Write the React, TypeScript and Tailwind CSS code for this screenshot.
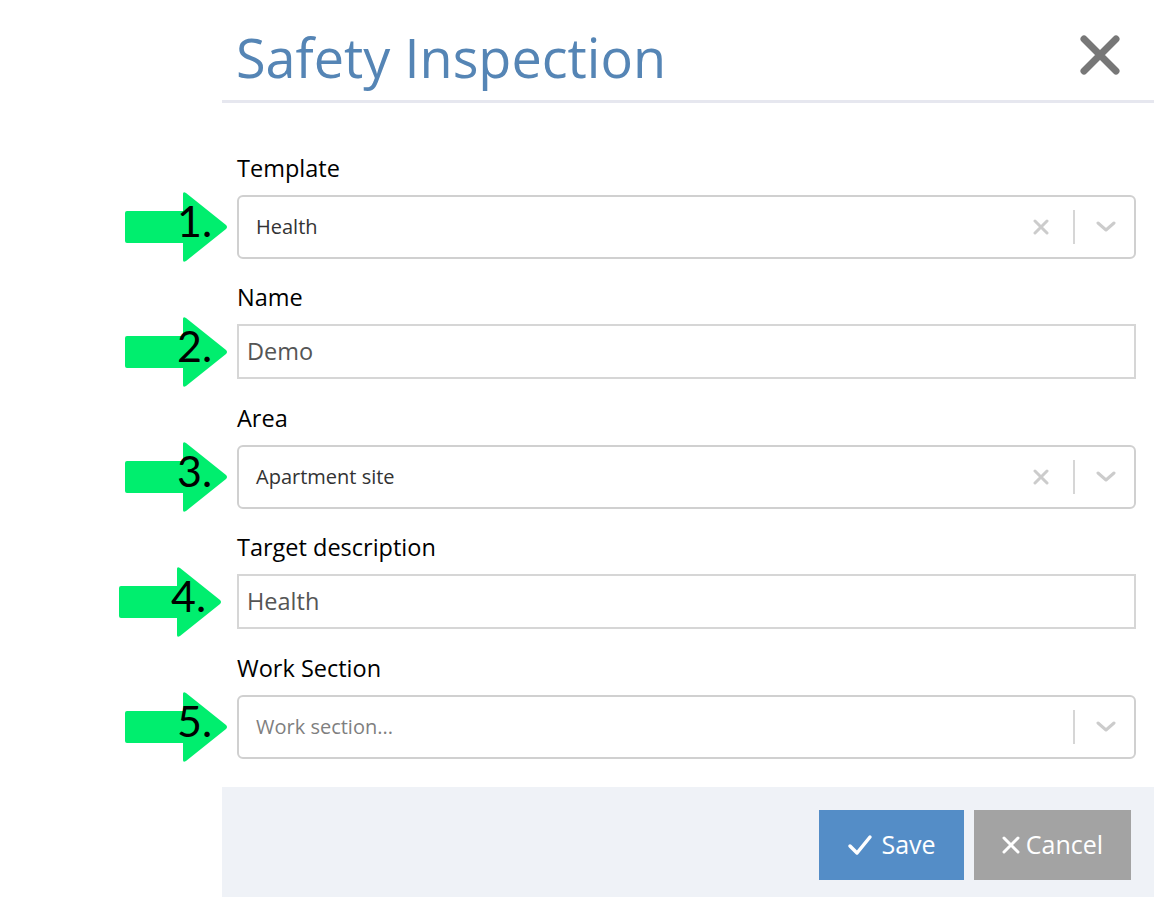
import React from "react";

function Arrow({ n, shift = 0 }: { n: string; shift?: number }) {
  return (
    <div
      className="absolute top-1/2 -translate-y-1/2 w-[104px] h-[72px]"
      style={{ left: -112 - shift }}
    >
      <svg width="104" height="72" viewBox="0 0 104 72" className="absolute inset-0">
        <path
          d="M2 20 H58 V3 Q58 0 61 2 L101 34 Q103 36 101 38 L61 70 Q58 72 58 69 V52 H2 Q0 52 0 50 V22 Q0 20 2 20 Z"
          fill="#00ee6e"
        />
      </svg>
      <span className="absolute left-[52px] top-[8px] text-[43px] leading-none text-black font-['Lato',sans-serif]">
        {n}
      </span>
    </div>
  );
}

function Label({ children }: { children: React.ReactNode }) {
  return <div className="text-[23.5px] leading-[30px] text-black mb-[12px]">{children}</div>;
}

function SelectBox({ value, placeholder, clearable = true }: { value?: string; placeholder?: string; clearable?: boolean }) {
  return (
    <div className="h-[64px] border-2 border-[#d0d0d0] rounded-[6px] flex items-center pl-[17px] pr-[18px]">
      <div className={"flex-1 text-[20px] " + (value ? "text-[#333]" : "text-[#7f7f7f]")}>{value ?? placeholder}</div>
      {clearable && (
        <svg width="16" height="16" viewBox="0 0 16 16" className="mr-[24px]">
          <path d="M2 2 L14 14 M14 2 L2 14" stroke="#cccccc" strokeWidth="3" strokeLinecap="round" />
        </svg>
      )}
      <div className="w-[2px] h-[34px] bg-[#d6d6d6]" />
      <svg width="20" height="12" viewBox="0 0 20 12" className="ml-[21px]">
        <path d="M2 2 L10 9 L18 2" stroke="#cccccc" strokeWidth="3" fill="none" strokeLinecap="round" strokeLinejoin="round" />
      </svg>
    </div>
  );
}

function TextBox({ value }: { value: string }) {
  return (
    <div className="h-[55px] border-2 border-[#d6d6d6] flex items-center pl-[8px] text-[23.5px] text-[#555]">{value}</div>
  );
}

export default function App() {
  return (
    <div className="w-full h-[897px] bg-white flex overflow-hidden font-['Open_Sans',sans-serif]">
      <div className="w-[222px] shrink-0" />
      <div className="flex-1 flex flex-col">
        <div className="h-[103px] shrink-0 border-b-[3px] border-[#e6e7ef] flex items-start justify-between pl-[14px] pr-[32px]">
          <h1 className="text-[54px] leading-none text-[#5585b5] mt-[30px]">Safety Inspection</h1>
          <svg width="44" height="44" viewBox="0 0 44 44" className="mt-[33px]">
            <path d="M6 6 L38 38 M38 6 L6 38" stroke="#777777" strokeWidth="7" strokeLinecap="round" />
          </svg>
        </div>
        <div className="flex-1 flex flex-col pl-[15px] pr-[18px] pt-[50px]">
          <Label>Template</Label>
          <div className="relative">
            <Arrow n="1." />
            <SelectBox value="Health" />
          </div>
          <div className="h-[23px]" />
          <Label>Name</Label>
          <div className="relative">
            <Arrow n="2." />
            <TextBox value="Demo" />
          </div>
          <div className="h-[24px]" />
          <Label>Area</Label>
          <div className="relative">
            <Arrow n="3." />
            <SelectBox value="Apartment site" />
          </div>
          <div className="h-[23px]" />
          <Label>Target description</Label>
          <div className="relative">
            <Arrow n="4." shift={6} />
            <TextBox value="Health" />
          </div>
          <div className="h-[24px]" />
          <Label>Work Section</Label>
          <div className="relative">
            <Arrow n="5." />
            <SelectBox placeholder="Work section..." clearable={false} />
          </div>
        </div>
        <div className="h-[110px] shrink-0 bg-[#eff2f7] flex items-start justify-end gap-[10px] pt-[23px] pr-[23px]">
          <button className="w-[145px] h-[70px] bg-[#548dc7] text-white text-[25px] flex items-center justify-center gap-[8px]">
            <svg width="26" height="22" viewBox="0 0 26 22">
              <path d="M3 12 L10 19 L23 3" stroke="white" strokeWidth="3.5" fill="none" strokeLinecap="round" strokeLinejoin="round" />
            </svg>
            Save
          </button>
          <button className="w-[157px] h-[70px] bg-[#a3a3a3] text-white text-[25px] flex items-center justify-center gap-[6px]">
            <svg width="18" height="18" viewBox="0 0 18 18">
              <path d="M2 2 L16 16 M16 2 L2 16" stroke="white" strokeWidth="3" strokeLinecap="round" />
            </svg>
            Cancel
          </button>
        </div>
      </div>
    </div>
  );
}
